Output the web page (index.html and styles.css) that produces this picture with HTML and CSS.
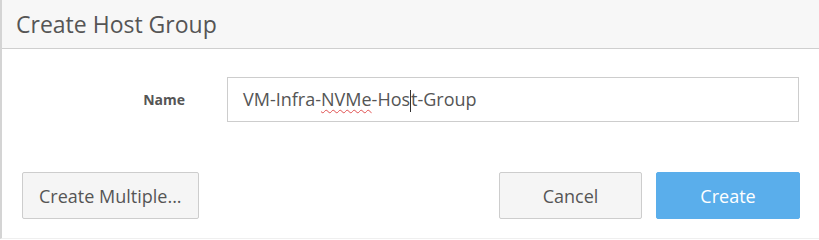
FILE: index.html
```html
<!DOCTYPE html>
<html lang="en">

<head>
  <meta charset="UTF-8">
  <title>Create Host Group</title>
  <link rel="stylesheet" href="styles.css">
</head>

<body>
  <div class="dialog">
    <div class="dialog-header">
      <h2 class="dialog-title">Create Host Group</h2>
    </div>

    <form class="dialog-body">
      <div class="field-row">
        <label class="field-label" for="hg-name">Name</label>
        <div class="field-input"><span class="field-value">VM-Infra-<span class="misspelled">NVMe</span>-Hos<span class="caret"></span>t-Group</span></div>
      </div>

      <div class="dialog-footer">
        <button type="button" class="btn">Create Multiple...</button>
        <div class="footer-right">
          <button type="button" class="btn btn-cancel">Cancel</button>
          <button type="submit" class="btn btn-primary">Create</button>
        </div>
      </div>
    </form>
  </div>
</body>

</html>
```

FILE: styles.css
```css
/* Page */
body {
  margin: 0;
  background-color: #fff;
  font-family: "Open Sans", Arial, sans-serif;
  color: #555;
}

.dialog {
  height: 239px;
  border-left: 2px solid #d4d4d4;
  border-bottom: 1px solid #efefef;
  box-sizing: border-box;
}

/* Header */
.dialog-header {
  height: 48px;
  background-color: #f7f7f7;
  border-bottom: 1px solid #cfcfcf;
  display: flex;
  align-items: center;
  padding-left: 14px;
}

.dialog-title {
  margin: 0;
  font-size: 23px;
  font-weight: normal;
  color: #555;
}

/* Form */
.dialog-body {
  padding: 28px 19px 0 20px;
}

.field-row {
  display: grid;
  grid-template-columns: 163px 1fr;
  gap: 42px;
  align-items: center;
  padding-right: 1px;
}

.field-label {
  text-align: right;
  font-size: 14px;
  font-weight: bold;
  color: #555;
}

.field-input {
  height: 45px;
  border: 1px solid #cdcdcd;
  box-sizing: border-box;
  padding: 0 15px;
  line-height: 43px;
  font-size: 18px;
  color: #555;
}

.misspelled {
  text-decoration: underline wavy #e05050;
  text-decoration-thickness: 1px;
  text-underline-offset: 3px;
}

.caret {
  display: inline-block;
  width: 1px;
  height: 22px;
  vertical-align: middle;
  background-color: #333;
}

/* Footer */
.dialog-footer {
  margin-top: 50px;
  display: flex;
  justify-content: space-between;
}

.footer-right {
  display: flex;
  gap: 14px;
}

.btn {
  height: 47px;
  padding: 0 16px;
  font-family: "Open Sans", Arial, sans-serif;
  font-size: 18px;
  color: #555;
  background-color: #f5f5f5;
  border: 1px solid #cdcdcd;
  border-radius: 2px;
}

.btn-cancel {
  width: 143px;
}

.btn-primary {
  width: 144px;
  background-color: #5aaeeb;
  border-color: #5aaeeb;
  color: #fff;
}
```
